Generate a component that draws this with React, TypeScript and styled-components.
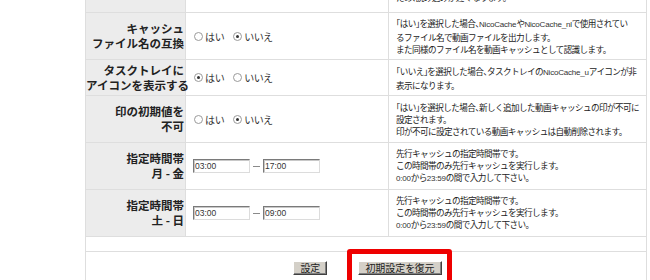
import React from 'react';
import styled, { createGlobalStyle, css } from 'styled-components';

type Choice = 'yes' | 'no';

type RowInfo =
  | { key: string; label: string[]; kind: 'radio'; value: Choice; desc: string[] }
  | { key: string; label: string[]; kind: 'time'; from: string; to: string; desc: string[] };

const ROWS: RowInfo[] = [
  {
    key: 'filename',
    label: ['キャッシュ', 'ファイル名の互換'],
    kind: 'radio',
    value: 'no',
    desc: [
      '「はい」を選択した場合、NicoCacheやNicoCache_nlで使用されてい',
      'るファイル名で動画ファイルを出力します。',
      'また同様のファイル名を動画キャッシュとして認識します。',
    ],
  },
  {
    key: 'tray',
    label: ['タスクトレイに', 'アイコンを表示する'],
    kind: 'radio',
    value: 'yes',
    desc: ['「いいえ」を選択した場合、タスクトレイのNicoCache_uアイコンが非', '表示になります。'],
  },
  {
    key: 'mark',
    label: ['印の初期値を', '不可'],
    kind: 'radio',
    value: 'no',
    desc: [
      '「はい」を選択した場合、新しく追加した動画キャッシュの印が不可に',
      '設定されます。',
      '印が不可に設定されている動画キャッシュは自動削除されます。',
    ],
  },
  {
    key: 'weekday',
    label: ['指定時間帯', '月 - 金'],
    kind: 'time',
    from: '03:00',
    to: '17:00',
    desc: ['先行キャッシュの指定時間帯です。', 'この時間帯のみ先行キャッシュを実行します。', '0:00から23:59の間で入力して下さい。'],
  },
  {
    key: 'weekend',
    label: ['指定時間帯', '土 - 日'],
    kind: 'time',
    from: '03:00',
    to: '09:00',
    desc: ['先行キャッシュの指定時間帯です。', 'この時間帯のみ先行キャッシュを実行します。', '0:00から23:59の間で入力して下さい。'],
  },
];

const GlobalStyle = createGlobalStyle`
  html, body {
    margin: 0;
    padding: 0;
    background: #fff;
    overflow: hidden;
  }
  body {
    font-family: "Noto Sans CJK JP", "Noto Sans", sans-serif;
    color: #222;
  }
`;

const Page = styled.div`
  width: 650px;
  height: 280px;
  overflow: hidden;
`;

const SettingsTable = styled.table`
  margin: -29px 0 0 85px;
  width: 562px;
  border-collapse: collapse;
  table-layout: fixed;
`;

const Row = styled.tr<{ $height: number }>`
  height: ${({ $height }) => $height}px;
`;

const Label = styled.th`
  width: 98px;
  padding: 0 1px 0 0;
  background: #ececec;
  border: 1px solid #dedede;
  text-align: right;
  vertical-align: middle;
  font-size: 11.5px;
  line-height: 15px;
  font-weight: 700;
  color: #222;
  white-space: nowrap;
`;

const LabelLine = styled.div`
  white-space: nowrap;
`;

const Control = styled.td`
  width: 194px;
  padding: 0 0 0 8px;
  border: 1px solid #dedede;
  vertical-align: middle;
  white-space: nowrap;
`;

const Desc = styled.td<{ $bottom?: boolean }>`
  padding: 0 0 0 7px;
  border: 1px solid #dedede;
  vertical-align: ${({ $bottom }) => ($bottom ? 'bottom' : 'middle')};
  color: #222;
  overflow: hidden;
  ${({ $bottom }) =>
    $bottom &&
    css`
      padding-bottom: 9px;
    `}
`;

const DescLine = styled.div`
  white-space: nowrap;
  font-size: 8.6px;
  letter-spacing: -0.6px;
  line-height: 12px;
  font-feature-settings: 'halt' 1;
`;

const Latin = styled.span`
  font-family: 'Liberation Sans', sans-serif;
  font-size: 8px;
  letter-spacing: -0.2px;
  color: #333;
`;

const Choices = styled.div`
  display: flex;
  align-items: center;
  gap: 9px;
  font-size: 10px;
  color: #333;
  font-feature-settings: 'palt';
`;

const Option = styled.label`
  display: inline-flex;
  align-items: center;
  gap: 2px;
`;

const RadioDot = styled.span<{ $checked?: boolean }>`
  position: relative;
  display: inline-block;
  width: 7px;
  height: 7px;
  border: 1px solid #9a9a9a;
  border-radius: 50%;
  background: #fff;

  ${({ $checked }) =>
    $checked &&
    css`
      &::after {
        content: '';
        position: absolute;
        left: 2px;
        top: 2px;
        width: 3px;
        height: 3px;
        border-radius: 50%;
        background: #333;
      }
    `}
`;

const TimeRange = styled.div`
  display: flex;
  align-items: center;
  gap: 3px;
  margin-left: -1px;
`;

const Dash = styled.span`
  display: inline-block;
  width: 7px;
  height: 1px;
  background: #8a8a8a;
`;

const TimeInput = styled.input`
  box-sizing: border-box;
  width: 57px;
  height: 14px;
  margin: 0;
  padding: 0 1px;
  border: 1px solid;
  border-color: #7a7a7a #dcdcdc #dcdcdc #7a7a7a;
  box-shadow: inset 1px 1px 0 #c8c8c8;
  background: #fff;
  font-family: 'Liberation Sans', sans-serif;
  font-size: 8.5px;
  color: #333;
  outline: none;
`;

const Spacer = styled.td`
  height: 12px;
  border: 1px solid #dedede;
`;

const ButtonCell = styled.td`
  height: 29px;
  border: 1px solid #dedede;
  vertical-align: middle;
`;

const ButtonBar = styled.div`
  display: flex;
  justify-content: center;
  align-items: center;
  gap: 31px;
  padding-left: 3px;
`;

const PushButton = styled.button`
  box-sizing: border-box;
  height: 14px;
  margin: 0;
  padding: 0 6px;
  border: 1px solid;
  border-color: #ffffff #404040 #404040 #ffffff;
  box-shadow: inset -1px -1px 0 #808080;
  background: #d4d0c8;
  font-family: "Noto Sans CJK JP", sans-serif;
  font-size: 10px;
  line-height: 12px;
  color: #222;
  font-feature-settings: 'palt';
`;

const Highlight = styled.span`
  position: relative;
  display: inline-flex;

  &::before {
    content: '';
    position: absolute;
    left: -11px;
    right: -10px;
    top: -12px;
    bottom: -13px;
    border: 5px solid #ee0000;
    border-radius: 3px;
    pointer-events: none;
  }
`;

// Latin words and digits come out narrow in the original, so wrap them
const withLatin = (text: string) =>
  text.split(/([A-Za-z0-9:_]+)/).map((part, i) =>
    /^[A-Za-z0-9:_]+$/.test(part) ? <Latin key={i}>{part}</Latin> : part,
  );

const RadioChoice = ({ value }: { value: Choice }) => (
  <Choices>
    <Option>
      <RadioDot $checked={value === 'yes'} />
      はい
    </Option>
    <Option>
      <RadioDot $checked={value === 'no'} />
      いいえ
    </Option>
  </Choices>
);

const rowHeight = (lines: number) => (lines === 2 ? 36 : 47);

export default function App() {
  return (
    <Page>
      <GlobalStyle />
      <SettingsTable>
        <tbody>
          <Row $height={41}>
            <Label />
            <Control />
            <Desc $bottom>
              <DescLine>ため、読み込みが遅くなります。</DescLine>
            </Desc>
          </Row>
          {ROWS.map((row) => (
            <Row key={row.key} $height={rowHeight(row.desc.length)}>
              <Label>
                {row.label.map((l) => (
                  <LabelLine key={l}>{l}</LabelLine>
                ))}
              </Label>
              <Control>
                {row.kind === 'radio' ? (
                  <RadioChoice value={row.value} />
                ) : (
                  <TimeRange>
                    <TimeInput defaultValue={row.from} />
                    <Dash />
                    <TimeInput defaultValue={row.to} />
                  </TimeRange>
                )}
              </Control>
              <Desc>
                {row.desc.map((d) => (
                  <DescLine key={d}>{withLatin(d)}</DescLine>
                ))}
              </Desc>
            </Row>
          ))}
          <tr>
            <Spacer colSpan={3} />
          </tr>
          <tr>
            <ButtonCell colSpan={3}>
              <ButtonBar>
                <PushButton>設定</PushButton>
                <Highlight>
                  <PushButton>初期設定を復元</PushButton>
                </Highlight>
              </ButtonBar>
            </ButtonCell>
          </tr>
        </tbody>
      </SettingsTable>
    </Page>
  );
}
